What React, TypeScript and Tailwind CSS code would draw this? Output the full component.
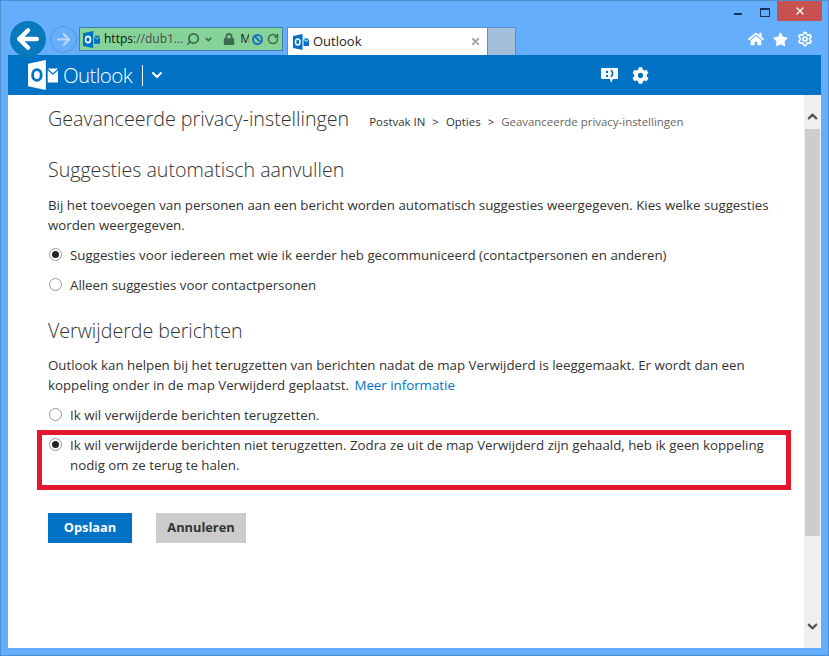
import { ArrowLeft, ArrowRight, ChevronDown, ChevronUp, RotateCw, Search, Settings, X } from "lucide-react";
import { FaCog, FaHome, FaLock, FaStar } from "react-icons/fa";

const OutlookIcon = ({ size = 16, fg = "#0072c6", bg = "#ffffff" }: { size?: number; fg?: string; bg?: string }) => {
  return (
    <svg width={size} height={size} viewBox="0 0 32 32" className="shrink-0">
      <path d="M0 4 L19 0 V32 L0 28 Z" fill={fg} />
      <ellipse cx="9.5" cy="16" rx="4.6" ry="5.8" fill="none" stroke={bg} strokeWidth="3" />
      <path d="M21 9 H32 L26.5 14 Z" fill={fg} />
      <path d="M21 11 L26.5 16 L32 11 V24 H21 Z" fill={fg} />
    </svg>
  );
};

const Radio = ({ checked }: { checked?: boolean }) => {
  return (
    <span className="ml-px mt-[3px] flex h-[13px] w-[13px] shrink-0 items-center justify-center rounded-full border border-[#999999] bg-white">
      {checked && <span className="h-[7px] w-[7px] rounded-full bg-[#222222]" />}
    </span>
  );
};

const Option = ({ checked, children }: { checked?: boolean; children: React.ReactNode }) => {
  return (
    <div className="flex gap-[8px] text-[13.3px] leading-[20px] text-[#333333]">
      <Radio checked={checked} />
      <div>{children}</div>
    </div>
  );
};

const App = () => {
  return (
    <div className="flex h-[656px] w-[829px] flex-col overflow-hidden border border-[#4f8fd0] bg-[#64aefb] font-['Open_Sans','Noto_Sans',sans-serif]">
      <div className="flex h-[54px] shrink-0 flex-col">
        <div className="flex h-[20px] shrink-0 items-start justify-end pr-[6px]">
          <div className="mb-[3px] mr-[18px] mt-[12px] h-[2px] w-[8px] bg-[#14365c]" />
          <div className="mr-[7px] mt-[7px] h-[9px] w-[10px] border border-t-2 border-[#14365c]" />
          <div className="flex h-[20px] w-[45px] items-center justify-center bg-[#c75050]">
            <X size={12} strokeWidth={2.5} className="text-white" />
          </div>
        </div>
        <div className="relative flex h-[34px] items-end pl-[9px]">
          <div className="z-10 mb-[-2px] flex h-[36px] w-[36px] shrink-0 items-center justify-center rounded-full bg-[#0a78bd]">
            <ArrowLeft size={30} strokeWidth={3.5} className="text-white" />
          </div>
          <div className="mb-[2px] ml-[4px] flex h-[27px] w-[27px] shrink-0 items-center justify-center rounded-full border border-[#5c90d8]">
            <ArrowRight size={19} strokeWidth={2.5} className="text-[#c4d8f4]" />
          </div>
          <div className="mb-[4px] ml-[2px] flex h-[24px] w-[204px] shrink-0 items-center border border-[#3f7fa8] bg-[#85d398] pl-[3px] text-[12px] text-[#4a4a4a]">
            <OutlookIcon size={17} />
            <span className="ml-[4px] text-[#111111]">https</span>
            <span>://dub1...</span>
            <Search size={14} strokeWidth={3} className="ml-[3px] -scale-x-100 text-[#3d6b4f]" />
            <ChevronDown size={9} strokeWidth={4} className="ml-[4px] text-[#3d6b4f]" />
            <FaLock size={12} className="ml-[10px] text-[#3d6b4f]" />
            <span className="ml-[5px] w-[9px] overflow-hidden text-[#222222]">M</span>
            <span className="ml-[3px] flex h-[11px] w-[11px] items-center justify-center rounded-full border-2 border-[#1f6fc0]">
              <span className="h-[2px] w-[8px] rotate-45 bg-[#1f6fc0]" />
            </span>
            <RotateCw size={12} strokeWidth={3} className="ml-[4px] text-[#3d6b4f]" />
          </div>
          <div className="ml-[4px] flex h-[28px] w-[200px] shrink-0 items-center border-l border-t border-[#5a8fc8] bg-white pl-[5px] pr-[5px] text-[13px] text-[#222222]">
            <OutlookIcon size={16} />
            <span className="ml-[4px] flex-1">Outlook</span>
            <X size={11} strokeWidth={4} className="mr-[1px] text-[#a8a8a8]" />
          </div>
          <div className="h-[28px] w-[29px] shrink-0 border border-b-0 border-[#5a8fc8] bg-[#a3bfdc]" />
          <div className="flex-1" />
          <div className="mb-[8px] mr-[15px] flex items-center gap-[9px] text-white">
            <FaHome size={16} />
            <FaStar size={15} />
            <Settings size={16} strokeWidth={2.5} />
          </div>
        </div>
      </div>

      <div className="mx-[7px] mb-[7px] flex min-h-0 flex-1 flex-col bg-white">
        <div className="flex h-[40px] shrink-0 items-center bg-[#0072c6] pl-[20px] text-white">
          <OutlookIcon size={30} fg="#ffffff" bg="#0072c6" />
          <span className="ml-[5px] text-[20.5px] font-light tracking-[-0.6px]">Outlook</span>
          <div className="ml-[10px] h-[21px] w-px bg-white" />
          <ChevronDown size={16} strokeWidth={3} className="ml-[6px]" />
          <div className="flex-1" />
          <svg width="17" height="16" viewBox="0 0 17 16" className="mr-[14px]">
            <path d="M0 1 H17 V12 H12 L10 16 L9 12 H0 Z" fill="#ffffff" />
            <rect x="5" y="4" width="2" height="2" fill="#0072c6" />
            <rect x="5" y="8" width="2" height="2" fill="#0072c6" />
            <path d="M10 3 Q13 6.5 10 10" stroke="#0072c6" strokeWidth="1.6" fill="none" />
          </svg>
          <FaCog size={17} className="mr-[172px]" />
        </div>

        <div className="flex min-h-0 flex-1">
          <div className="min-w-0 flex-1 pl-[40px] pr-[25px] pt-[10px] text-[#333333]">
            <div className="flex items-baseline">
              <h1 className="text-[19.7px] font-light leading-[28px]">Geavanceerde privacy-instellingen</h1>
              <div className="ml-[20px] flex gap-[7px] text-[11.45px]">
                <span>Postvak IN</span>
                <span>&gt;</span>
                <span>Opties</span>
                <span>&gt;</span>
                <span className="text-[#666666]">Geavanceerde privacy-instellingen</span>
              </div>
            </div>

            <h2 className="mt-[23px] text-[19.6px] font-light leading-[28px]">Suggesties automatisch aanvullen</h2>
            <p className="mt-[11px] text-[13.3px] leading-[20px]">
              Bij het toevoegen van personen aan een bericht worden automatisch suggesties weergegeven. Kies welke suggesties worden weergegeven.
            </p>
            <div className="mt-[10px]">
              <Option checked>Suggesties voor iedereen met wie ik eerder heb gecommuniceerd (contactpersonen en anderen)</Option>
            </div>
            <div className="mt-[10px]">
              <Option>Alleen suggesties voor contactpersonen</Option>
            </div>

            <h2 className="mt-[22px] text-[19.6px] font-light leading-[28px]">Verwijderde berichten</h2>
            <p className="mt-[10px] text-[13.3px] leading-[20px]">
              Outlook kan helpen bij het terugzetten van berichten nadat de map Verwijderd is leeggemaakt. Er wordt dan een koppeling onder in de map Verwijderd geplaatst.{" "}
              <span className="ml-[2px] text-[#0072c6]">Meer informatie</span>
            </p>
            <div className="mt-[10px]">
              <Option>Ik wil verwijderde berichten terugzetten.</Option>
            </div>
            <div className="ml-[-11px] mr-[-12px] mt-[5px] h-[60px] border-[5px] border-[#e3172d] pl-[6px]">
              <Option checked>
                Ik wil verwijderde berichten niet terugzetten. Zodra ze uit de map Verwijderd zijn gehaald, heb ik geen koppeling nodig om ze terug te halen.
              </Option>
            </div>
            <div className="mt-[23px] flex gap-[24px] text-[12.8px] font-bold">
              <button className="h-[30px] w-[84px] bg-[#0072c6] text-white">Opslaan</button>
              <button className="h-[30px] w-[90px] bg-[#cccccc] text-[#333333]">Annuleren</button>
            </div>
          </div>

          <div className="flex w-[17px] shrink-0 flex-col items-center bg-[#f0f0f0] py-[1px]">
            <ChevronUp size={15} strokeWidth={3.5} className="mt-[13px] text-[#555555]" />
            <div className="mt-[5px] h-[407px] w-[15px] bg-[#cdcdcd]" />
            <div className="flex-1" />
            <ChevronDown size={15} strokeWidth={3.5} className="mb-[13px] text-[#555555]" />
          </div>
        </div>
      </div>
    </div>
  );
};

export default App;
